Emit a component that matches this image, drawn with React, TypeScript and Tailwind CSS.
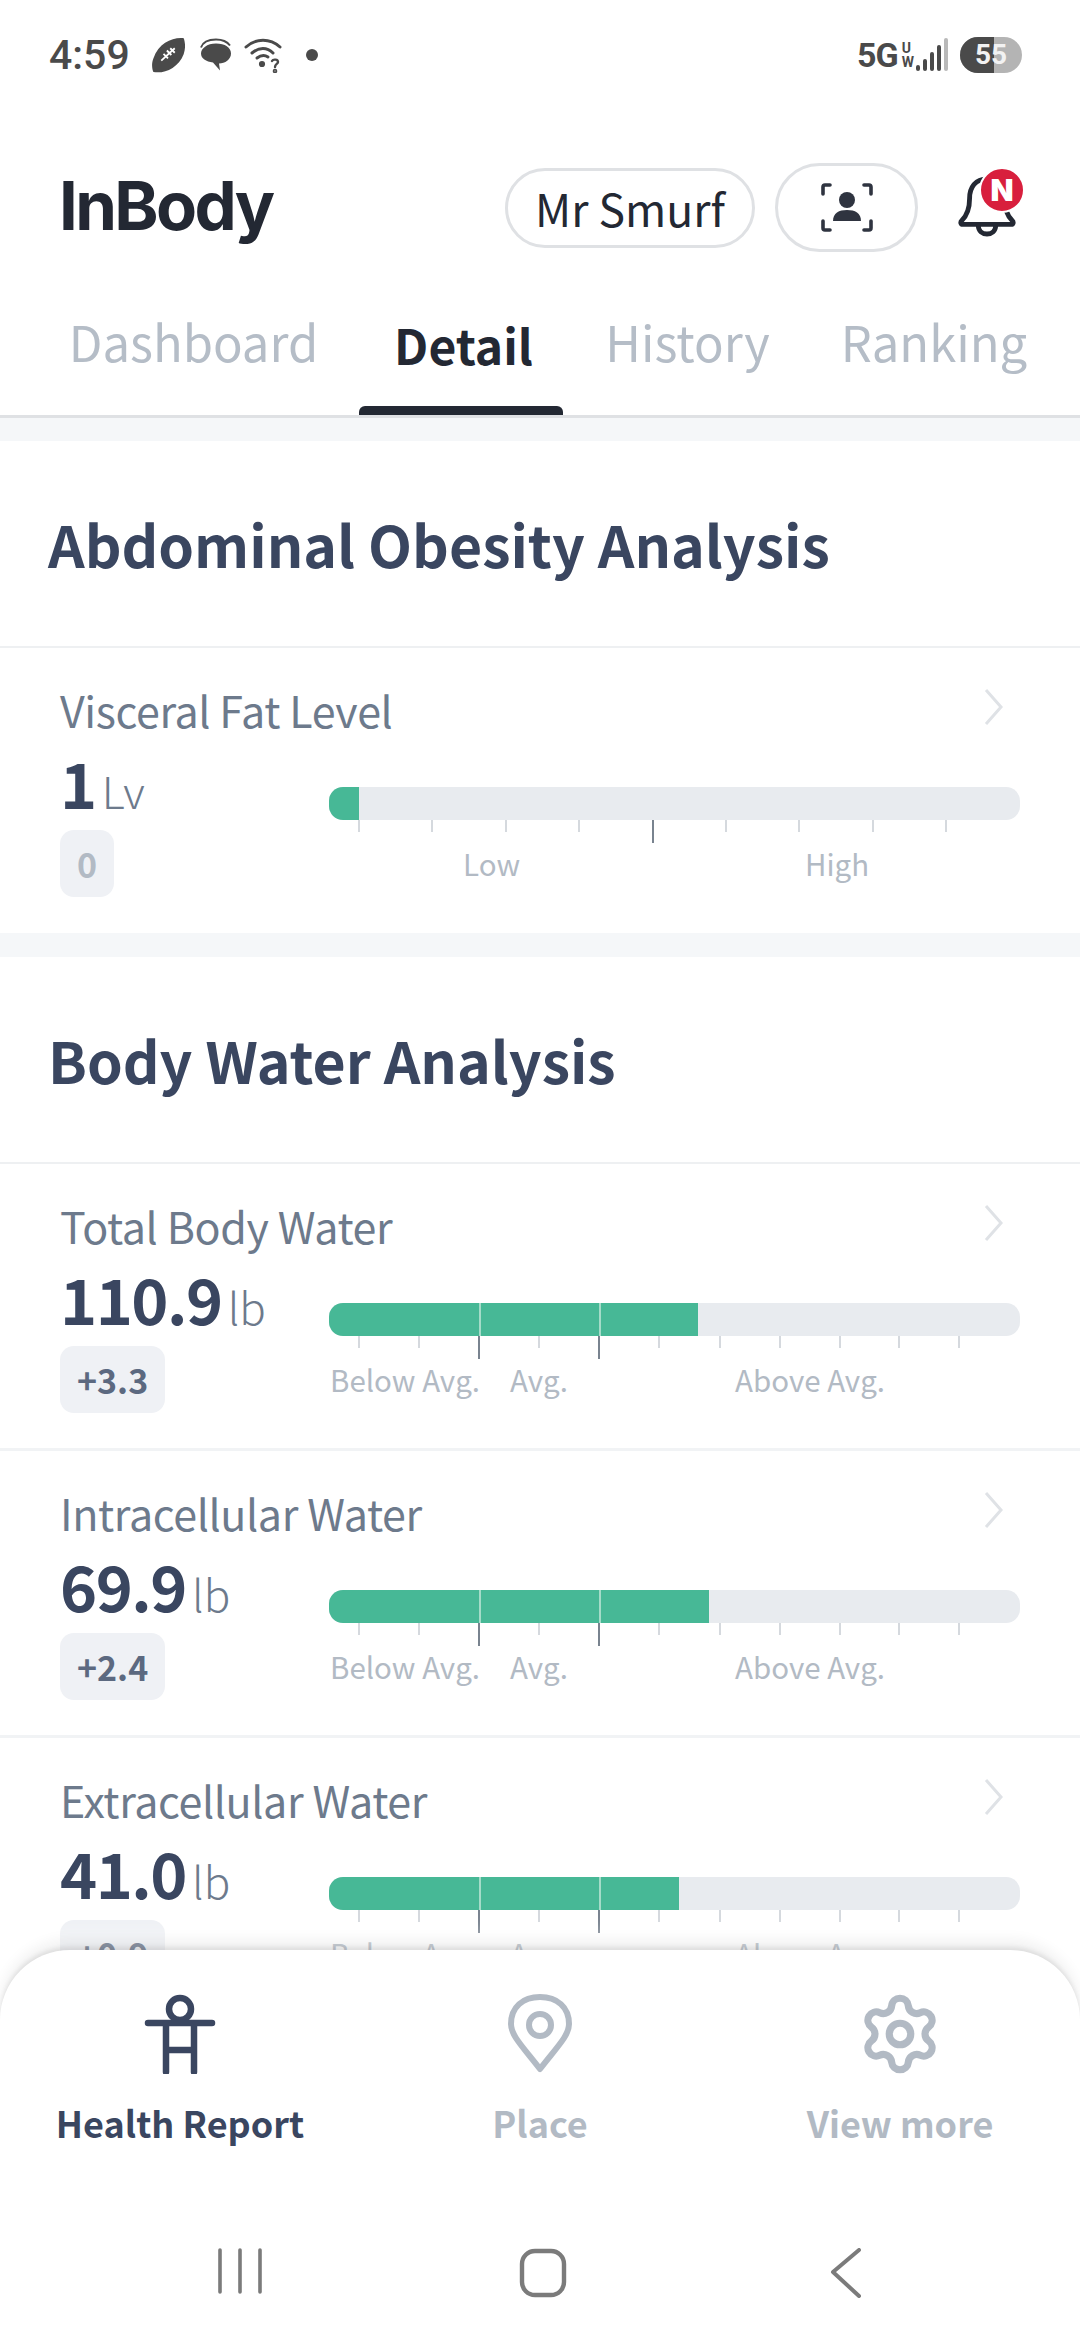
import React from 'react';
import { Settings } from 'lucide-react';

const font = "font-['Noto_Sans_CJK_KR','Noto_Sans',sans-serif]";

const StatusBar = () => (
  <div className="h-[80px] pt-[35px] pl-[49px] pr-[58px] flex items-start justify-between text-[#4a4a4a] font-['Roboto',sans-serif]">
    <div className="flex items-center h-[40px]">
      <span className="text-[41px] leading-[40px] font-medium">4:59</span>
      <svg className="ml-[21px]" width="34" height="36" viewBox="2 1 30 32">
        <path d="M31 2C21 1 9 6 4 20c-2 5-1 10 0 12 9 2 22-3 27-16 2-6 1-11 0-14z" fill="#4a4a4a" />
        <path d="M11 22l12-11M13 16l4 4M16 13l4 4M19 11l4 4" stroke="#fff" strokeWidth="1.6" />
      </svg>
      <svg className="ml-[15px]" width="32" height="34" viewBox="1 1 32 33">
        <path d="M2 10c2-6 8-8 15-8 6 0 11 2 14 6" stroke="#4a4a4a" strokeWidth="2" fill="none" />
        <path d="M17 6c9 0 15 4 15 10s-6 10-12 10l1 7-7-8C7 24 2 21 2 16S8 6 17 6z" fill="#4a4a4a" />
      </svg>
      <svg className="ml-[12px]" width="38" height="36" viewBox="0 0 38 36" fill="none" stroke="#4a4a4a" strokeWidth="3" strokeLinecap="round">
        <path d="M2 10c10-9 24-9 34 0" />
        <path d="M8 16c7-6 15-6 21 0" />
        <path d="M13 21c4-3 8-3 11-1" />
        <circle cx="18" cy="27" r="1.6" fill="#4a4a4a" />
        <path d="M28 24c1-2 6-2 6 1 0 2-3 2-3 5" strokeWidth="2.4" />
        <circle cx="31" cy="34" r="0.8" fill="#4a4a4a" />
      </svg>
      <span className="ml-[24px] w-[12px] h-[12px] rounded-full bg-[#4a4a4a]" />
    </div>
    <div className="flex items-center h-[40px]">
      <span className="text-[34px] leading-[40px] font-bold tracking-[-1px]">5G</span>
      <div className="ml-[4px] flex flex-col text-[14px] leading-[14px] font-bold">
        <span>U</span>
        <span>W</span>
      </div>
      <svg className="ml-[2px]" width="32" height="36" viewBox="0 0 32 36">
        <rect x="0" y="28" width="4" height="6" rx="2" fill="#4a4a4a" />
        <rect x="7" y="22" width="4" height="12" rx="2" fill="#4a4a4a" />
        <rect x="14" y="15" width="4" height="19" rx="2" fill="#4a4a4a" />
        <rect x="21" y="8" width="4" height="26" rx="2" fill="#4a4a4a" />
        <rect x="28" y="1" width="4" height="33" rx="2" fill="#b9b9b9" />
      </svg>
      <div className="ml-[12px] relative w-[62px] h-[36px] rounded-full overflow-hidden flex bg-[#b4b4b4]">
        <div className="w-[34px] bg-[#4a4a4a]" />
        <span className="absolute inset-0 flex items-center justify-center text-[#f2f2f2] text-[28px] font-bold">55</span>
      </div>
    </div>
  </div>
);

const Header = () => (
  <div className="h-[138px] pt-[83px] box-content pl-[59px] pr-[44px] flex items-start">
    <div className="w-[446px] h-[110px] flex items-center">
      <span className="font-['Inter',sans-serif] font-bold text-[#232833] text-[67px] leading-none tracking-[-2.6px] mt-[-26px]">InBody</span>
    </div>
    <div className="h-[80px] w-[250px] mt-[5px] rounded-full border-[3px] border-[#dfe1e4] flex items-center justify-center text-[#232833] text-[44.5px] leading-none">
      Mr Smurf
    </div>
    <div className="h-[89px] w-[143px] ml-[20px] rounded-full border-[3px] border-[#dfe1e4] flex items-center justify-center">
      <svg width="52" height="50" viewBox="0 0 52 50" fill="none" stroke="#2f3440" strokeWidth="3.6" strokeLinecap="round" strokeLinejoin="round">
        <path d="M2 11V4q0-2 2-2h5M50 11V4q0-2-2-2h-5M2 38v7q0 2 2 2h5M50 38v7q0 2-2 2h-5" />
        <circle cx="26" cy="17" r="8" fill="#2f3440" stroke="none" />
        <path d="M12 38c0-8 6-11 14-11s14 3 14 11z" fill="#2f3440" stroke="none" />
      </svg>
    </div>
    <div className="relative w-[74px] h-[70px] ml-[40px] mt-[10px]">
      <svg width="58" height="64" viewBox="0 0 60 66" fill="none" stroke="#232833" strokeWidth="5" strokeLinecap="round" strokeLinejoin="round" className="absolute left-0 top-0">
        <path d="M30 6C18 6 12 15 12 26c0 10-2 17-8 23-2 2-1 4 1 4h50c2 0 3-2 1-4-6-6-8-13-8-23C48 15 42 6 30 6z" />
        <path d="M21 54c0 12 18 12 18 0" />
      </svg>
      <div className="absolute left-[21px] top-[-6px] w-[46px] h-[46px] rounded-full bg-[#d81f3d] border-[2px] border-white flex items-center justify-center text-white text-[30px] leading-none font-black font-['Inter',sans-serif]">
        N
      </div>
    </div>
  </div>
);

const tabs = [
  { label: 'Dashboard', width: 'w-[243px]', gap: 'ml-[72px]', active: false },
  { label: 'Detail', width: 'w-[133px]', gap: 'ml-[82px]', active: true },
  { label: 'History', width: 'w-[161px]', gap: 'ml-[77px]', active: false },
  { label: 'Ranking', width: 'w-[182px]', gap: 'ml-[75px]', active: false },
];

const Tabs = () => (
  <div className="h-[118px] mt-[-1px] flex border-b-[3px] border-[#dfe1e4]">
    {tabs.map((tab) => (
      <div key={tab.label} className={`${tab.gap} ${tab.width} relative h-[115px] flex justify-center whitespace-nowrap leading-[60px] ${tab.active ? 'text-[48px] font-bold text-[#232833] pt-[14px]' : 'text-[49px] text-[#b5bdc7] pt-[11px]'}`}>
        {tab.label}
        {tab.active && <div className="absolute bottom-0 left-[-38px] right-[-33px] h-[9px] rounded-t-[6px] bg-[#232833]" />}
      </div>
    ))}
  </div>
);

const SectionTitle = ({ title }: { title: string }) => (
  <div className="h-[207px] flex items-center pl-[48px] border-b-[2px] border-[#eef0f2] text-[57.2px] leading-none font-bold text-[#3a4660]">
    {title}
  </div>
);

type Metric = {
  title: string;
  value: string;
  unit: string;
  change: string;
  muted?: boolean;
  fill: number;
  ticks: { at: number; long?: boolean }[];
  labels: { text: string; at: number }[];
  dividers: number[];
};

const waterTicks = [30, 90, 150, 210, 270, 330, 391, 451, 511, 570, 630].map((at) => ({ at, long: at === 150 || at === 270 }));
const waterLabels = [
  { text: 'Below Avg.', at: 1 },
  { text: 'Avg.', at: 181 },
  { text: 'Above Avg.', at: 406 },
];

const fatTicks = [30, 103, 177, 250, 324, 397, 470, 544, 617].map((at) => ({ at, long: at === 324 }));

const MetricRow = ({ metric, last }: { metric: Metric; last?: boolean }) => (
  <div className={`h-[287px] pl-[60px] pr-[60px] relative ${last ? '' : 'border-b-[3px] border-[#f1f3f5]'}`}>
    <div className="flex justify-between items-center h-[64px] pt-[29px] box-content">
      <span className="text-[43px] leading-[64px] tracking-[-0.4px] text-[#6d7a8c]">{metric.title}</span>
      <svg width="20" height="36" viewBox="0 0 20 36" fill="none" stroke="#dfe2e6" strokeWidth="3" className="mt-[-4px] mr-[16px]">
        <path d="M2 1l15 17L2 35" />
      </svg>
    </div>
    <div className="flex mt-[5px]">
      <div className="w-[269px] shrink-0">
        <div className="h-[72px] flex items-baseline">
          <span className="text-[63px] leading-[72px] tracking-[-1.5px] font-bold text-[#3a4660]">{metric.value}</span>
          <span className="ml-[6px] text-[44px] leading-[72px] font-light text-[#6d7a8c]">{metric.unit}</span>
        </div>
        <div className={`mt-[12px] inline-flex h-[67px] items-center px-[17px] rounded-[14px] bg-[#eff1f5] text-[34px] font-bold ${metric.muted ? 'text-[#b2bac4]' : 'text-[#5c6980]'}`}>
          {metric.change}
        </div>
      </div>
      <div className="relative w-[692px] h-[120px] mt-[41px]">
        <div className="relative h-[33px] rounded-[14px] bg-[#e8ebef] overflow-hidden">
          <div className="h-full bg-[#47b896]" style={{ width: metric.fill }} />
          {metric.dividers.map((at) => (
            <div key={at} className="absolute top-0 bottom-0 w-[2px] bg-[#a5dcc9]" style={{ left: at }} />
          ))}
        </div>
        {metric.ticks.map((tick) => (
          <div
            key={tick.at}
            className={`absolute top-[33px] w-[2px] ${tick.long ? 'h-[23px] bg-[#79838f]' : 'h-[12px] bg-[#d5d9de]'}`}
            style={{ left: tick.at - 1 }}
          />
        ))}
        {metric.labels.map((label) => (
          <span key={label.text} className="absolute top-[54px] text-[29.5px] leading-[44px] text-[#b2bac4] whitespace-nowrap" style={{ left: label.at }}>
            {label.text}
          </span>
        ))}
      </div>
    </div>
  </div>
);

const visceral: Metric = {
  title: 'Visceral Fat Level',
  value: '1',
  unit: 'Lv',
  change: '0',
  muted: true,
  fill: 30,
  ticks: fatTicks,
  labels: [
    { text: 'Low', at: 134 },
    { text: 'High', at: 476 },
  ],
  dividers: [],
};

const water: Metric[] = [
  { title: 'Total Body Water', value: '110.9', unit: 'lb', change: '+3.3', fill: 369, ticks: waterTicks, labels: waterLabels, dividers: [150, 270] },
  { title: 'Intracellular Water', value: '69.9', unit: 'lb', change: '+2.4', fill: 380, ticks: waterTicks, labels: waterLabels, dividers: [150, 270] },
  { title: 'Extracellular Water', value: '41.0', unit: 'lb', change: '+0.9', fill: 350, ticks: waterTicks, labels: waterLabels, dividers: [150, 270] },
];

const BottomNav = () => (
  <div className="absolute left-0 right-0 bottom-0 h-[390px] rounded-t-[70px] bg-white shadow-[0_-3px_4px_rgba(0,0,0,0.08),0_-10px_14px_rgba(0,0,0,0.06),0_-20px_16px_rgba(255,255,255,0.3)]">
    <div className="flex h-[242px] pt-[44px]">
      <div className="w-[360px] flex flex-col items-center">
        <svg width="72" height="80" viewBox="0 0 72 80" fill="none" stroke="#3a4660" strokeWidth="6.5" strokeLinecap="round">
          <circle cx="36" cy="15" r="11" />
          <path d="M4 29h64M22 29v49M50 29v49M22 56h28" />
        </svg>
        <span className="mt-[22px] text-[36px] leading-[52px] font-bold text-[#3a4660]">Health Report</span>
      </div>
      <div className="w-[360px] flex flex-col items-center">
        <svg width="64" height="80" viewBox="0 0 64 80" fill="none" stroke="#b2bac4" strokeWidth="6">
          <path d="M32 75C16 54 3 42 3 30 3 13 15 3 32 3s29 10 29 27c0 12-13 24-29 45z" strokeLinejoin="round" />
          <circle cx="32" cy="31" r="11" />
        </svg>
        <span className="mt-[22px] text-[36px] leading-[52px] font-bold text-[#b2bac4]">Place</span>
      </div>
      <div className="w-[360px] flex flex-col items-center">
        <Settings size={86} color="#b2bac4" strokeWidth={2} className="mt-[-3px] mb-[-3px]" />
        <span className="mt-[22px] text-[36px] leading-[52px] font-bold text-[#b2bac4]">View more</span>
      </div>
    </div>
    <div className="flex h-[148px] items-start pt-[56px]">
      <div className="w-[263px] flex justify-end">
        <svg width="46" height="46" viewBox="0 0 46 46" stroke="#7b7b7b" strokeWidth="3.6" strokeLinecap="round">
          <path d="M3 2v42M23 2v42M43 2v42" />
        </svg>
      </div>
      <div className="ml-[256px]">
        <svg width="48" height="50" viewBox="0 0 48 50" fill="none" stroke="#7b7b7b" strokeWidth="4.4">
          <rect x="3" y="3" width="42" height="44" rx="13" />
        </svg>
      </div>
      <div className="ml-[263px]">
        <svg width="32" height="50" viewBox="0 0 32 50" fill="none" stroke="#7b7b7b" strokeWidth="4" strokeLinecap="round" strokeLinejoin="round">
          <path d="M29 2L3 24l26 24" />
        </svg>
      </div>
    </div>
  </div>
);

const App = () => {
  return (
    <div className={`${font} relative w-[1080px] h-[2340px] overflow-hidden bg-white`}>
      <StatusBar />
      <Header />
      <Tabs />
      <div className="h-[23px] bg-[#f5f7f9]" />
      <SectionTitle title="Abdominal Obesity Analysis" />
      <MetricRow metric={visceral} last />
      <div className="h-[24px] bg-[#f5f7f9] mt-[-2px]" />
      <SectionTitle title="Body Water Analysis" />
      {water.map((metric) => (
        <MetricRow key={metric.title} metric={metric} />
      ))}
      <BottomNav />
    </div>
  );
};

export default App;
